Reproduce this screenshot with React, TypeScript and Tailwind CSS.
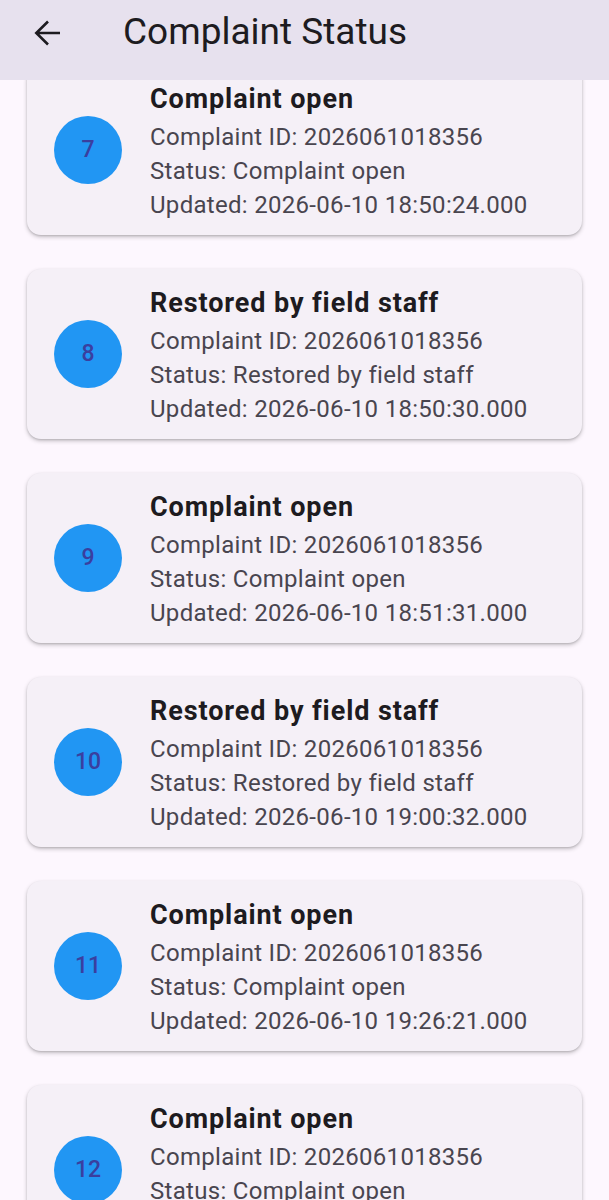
import React from "react";

const items = [
  { n: 7, title: "Complaint open", time: "2026-06-10 18:50:24.000" },
  { n: 8, title: "Restored by field staff", time: "2026-06-10 18:50:30.000" },
  { n: 9, title: "Complaint open", time: "2026-06-10 18:51:31.000" },
  { n: 10, title: "Restored by field staff", time: "2026-06-10 19:00:32.000" },
  { n: 11, title: "Complaint open", time: "2026-06-10 19:26:21.000" },
  { n: 12, title: "Complaint open", time: "2026-06-10 19:30:02.000" },
];

export default function App() {
  return (
    <div
      className="w-[609px] h-[1200px] overflow-hidden bg-[#fdf7fe] flex flex-col"
      style={{ fontFamily: "Roboto, 'Noto Sans', sans-serif" }}
    >
      <header className="h-[80px] shrink-0 bg-[#e7e1ee] flex items-center relative z-10">
        <div className="w-[123px] flex items-center pl-[34px] -mt-[15px]">
          <svg width="27" height="26" viewBox="0 0 27 26" fill="none">
            <path
              d="M26 13H3M14 1.5L2.3 13 14 24.5"
              stroke="#1d1b20"
              strokeWidth="2.6"
            />
          </svg>
        </div>
        <h1 className="text-[37px] leading-[44px] text-[#1d1b20] -mt-[16px]">Complaint Status</h1>
      </header>
      <div className="flex-1 overflow-hidden">
        <div className="-mt-[15px] flex flex-col gap-[34px] px-[27px]">
          {items.map((it) => (
            <div
              key={it.n}
              className="h-[170px] shrink-0 rounded-[14px] bg-[#f5f0f7] shadow-[0_2px_4px_rgba(0,0,0,0.22),0_1px_2px_rgba(0,0,0,0.12)] flex items-center pl-[27px]"
            >
              <div className="w-[68px] h-[68px] rounded-full bg-[#2196f3] flex items-center justify-center text-[23px] font-medium text-[#3a3f9f] shrink-0">
                {it.n}
              </div>
              <div className="ml-[28px] self-stretch pt-[16px] flex flex-col">
                <div className="text-[27px] leading-[36px] font-bold tracking-[0.9px] text-[#1d1b20]">{it.title}</div>
                <div className="mt-[3px] text-[24px] leading-[34px] tracking-[0.3px] text-[#49454f]">Complaint ID: 2026061018356</div>
                <div className="text-[24px] leading-[34px] tracking-[0.3px] text-[#49454f]">Status: {it.title}</div>
                <div className="text-[24px] leading-[34px] tracking-[0.3px] text-[#49454f]">Updated: {it.time}</div>
              </div>
            </div>
          ))}
        </div>
      </div>
    </div>
  );
}
